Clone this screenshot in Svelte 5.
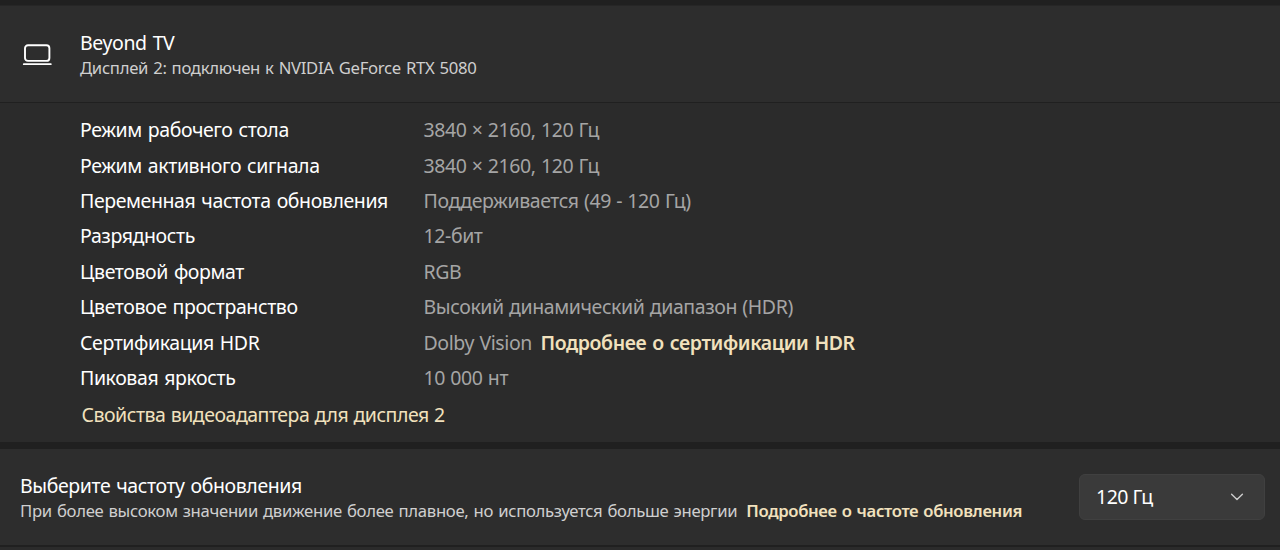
<script lang="ts">
	type Row = { label: string; value: string; link?: string };

	const rows: Row[] = [
		{ label: 'Режим рабочего стола', value: '3840 × 2160, 120 Гц' },
		{ label: 'Режим активного сигнала', value: '3840 × 2160, 120 Гц' },
		{ label: 'Переменная частота обновления', value: 'Поддерживается (49 - 120 Гц)' },
		{ label: 'Разрядность', value: '12-бит' },
		{ label: 'Цветовой формат', value: 'RGB' },
		{ label: 'Цветовое пространство', value: 'Высокий динамический диапазон (HDR)' },
		{ label: 'Сертификация HDR', value: 'Dolby Vision', link: 'Подробнее о сертификации HDR' },
		{ label: 'Пиковая яркость', value: '10 000 нт' }
	];
</script>

<main class="page">
	<section class="card header">
		<svg class="device" width="30" height="22" viewBox="0 0 30 22" fill="none" stroke="currentColor" stroke-width="1.9" aria-hidden="true">
			<rect x="3" y="1.3" width="24.4" height="15.6" rx="3" />
			<path d="M1.8 20.2h27" stroke-linecap="round" stroke-width="1.8" />
		</svg>
		<div class="text">
			<span class="title">Beyond TV</span>
			<span class="sub">Дисплей 2: подключен к NVIDIA GeForce RTX 5080</span>
		</div>
	</section>

	<section class="details">
		<dl>
			{#each rows as row}
				<dt>{row.label}</dt>
				<dd>
					<span>{row.value}</span>
					{#if row.link}<a href="#hdr">{row.link}</a>{/if}
				</dd>
			{/each}
		</dl>
		<a class="adapter" href="#adapter">Свойства видеоадаптера для дисплея 2</a>
	</section>

	<section class="card refresh">
		<div class="text">
			<span class="title">Выберите частоту обновления</span>
			<span class="sub">
				<span>При более высоком значении движение более плавное, но используется больше энергии</span>
				<a href="#refresh">Подробнее о частоте обновления</a>
			</span>
		</div>
		<button class="select">
			<span>120 Гц</span>
			<svg width="14" height="10" viewBox="0 0 14 10" fill="none" stroke="currentColor" stroke-width="1.4" stroke-linecap="round" stroke-linejoin="round" aria-hidden="true">
				<path d="M1.6 2.2 7 7.6l5.4-5.4" />
			</svg>
		</button>
	</section>

	<div class="next"></div>
</main>

<style>
	:global(body) {
		background: #202020;
	}

	.page {
		box-sizing: border-box;
		height: 550px;
		padding-top: 5px;
		overflow: hidden;
		display: flex;
		flex-direction: column;
		background: #202020;
		color: #fff;
		font-family: 'Noto Sans', 'Open Sans', sans-serif;
		font-size: 19.5px;
		line-height: 26px;
		letter-spacing: -0.4px;
		word-spacing: 1.3px;
		white-space: nowrap;
	}

	a {
		color: #f1e1bd;
		font-weight: 600;
		text-decoration: none;
	}

	.card {
		box-sizing: border-box;
		display: flex;
		align-items: center;
		flex-shrink: 0;
		background: #2d2d2d;
	}

	.header {
		height: 97px;
		padding: 0 20px 0 22px;
		border-top: 1px solid #262626;
	}

	.device {
		flex-shrink: 0;
		margin: 1px 28px 0 0;
	}

	.text {
		display: flex;
		flex-direction: column;
		padding-top: 1px;
	}

	.sub {
		display: flex;
		gap: 9px;
		font-size: 16.7px;
		line-height: 24px;
		letter-spacing: -0.3px;
		word-spacing: 1px;
		color: #cfcfcf;
	}

	.sub a {
		letter-spacing: -0.35px;
	}

	.details {
		box-sizing: border-box;
		height: 339px;
		flex-shrink: 0;
		margin-top: 1px;
		padding: 9.5px 20px 0 80px;
		background: #2b2b2b;
	}

	dl {
		display: grid;
		grid-template-columns: 343.5px 1fr;
		grid-auto-rows: 35.4px;
		align-items: center;
		margin: 0;
	}

	dd {
		display: flex;
		gap: 8.5px;
		margin: 0;
		color: #a5a5a5;
		word-spacing: 0.6px;
	}

	dd a {
		word-spacing: 1.3px;
	}

	.adapter {
		display: block;
		width: max-content;
		margin: 6.5px 0 0 1.5px;
		font-weight: 400;
		letter-spacing: -0.48px;
		word-spacing: 0.7px;
	}

	.refresh {
		height: 96px;
		margin-top: 7px;
		padding: 0 15px 0 20px;
		justify-content: space-between;
	}

	.select {
		box-sizing: border-box;
		display: flex;
		align-items: center;
		justify-content: space-between;
		width: 186px;
		height: 46px;
		padding: 0 20px 0 16px;
		border: 1px solid #404040;
		border-radius: 6px;
		background: #3a3a3a;
		color: #fff;
		font: inherit;
		letter-spacing: -0.5px;
	}

	.select svg {
		color: #ccc;
	}

	.next {
		flex: 1;
		margin-top: 2px;
		background: #2b2b2b;
	}
</style>
